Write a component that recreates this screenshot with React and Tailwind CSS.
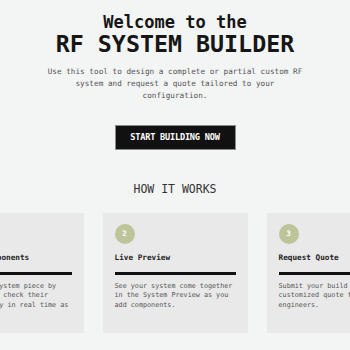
const steps = [
  {
    n: "1",
    title: "Select Components",
    text: "Build your system piece by piece and we check their compatibility in real time as",
  },
  {
    n: "2",
    title: "Live Preview",
    text: "See your system come together in the System Preview as you add components.",
  },
  {
    n: "3",
    title: "Request Quote",
    text: "Submit your build and get a customized quote from our engineers.",
  },
];

export default function App() {
  return (
    <div
      className="w-full h-[350px] overflow-hidden bg-[#f3f4f4] flex flex-col items-center pt-[14px]"
      style={{ fontFamily: '"DejaVu Sans Mono", "Liberation Mono", monospace' }}
    >
      {/* hero */}
      <h1 className="text-center text-[#161616] font-bold flex flex-col items-center">
        <span className="text-[17px] leading-[17px]">Welcome to the</span>
        <span className="text-[23.3px] leading-[25px]">RF SYSTEM BUILDER</span>
      </h1>
      <p className="mt-[10px] w-[262px] text-center text-[7.7px] leading-[12px] text-[#555]">
        Use this tool to design a complete or partial custom RF system and
        request a quote tailored to your configuration.
      </p>

      <button className="mt-[23px] h-[25px] w-[121px] bg-[#111] border border-[#8a8a8a] text-white text-[8.6px] font-bold tracking-tight">
        START BUILDING NOW
      </button>

      <h2 className="mt-[32px] text-[11.5px] leading-[14px] text-[#333]">
        HOW IT WORKS
      </h2>

      {/* steps */}
      <div className="mt-[17px] w-full flex justify-center gap-[19px]">
        {steps.map((s) => (
          <div
            key={s.n}
            className="w-[145px] shrink-0 bg-[#e9e9e9] px-[12px] pt-[11px] pb-[22px]"
          >
            <div className="w-[20px] h-[20px] rounded-full bg-[#bdc49a] flex items-center justify-center text-white text-[7.5px] font-bold">
              {s.n}
            </div>
            <h3 className="mt-[8.5px] text-[7.7px] leading-[10px] font-bold text-[#222]">
              {s.title}
            </h3>
            <div className="mt-[9px] h-[3px] bg-[#111]" />
            <p className="mt-[7px] text-[6.75px] leading-[9.7px] text-[#555]">
              {s.text}
            </p>
          </div>
        ))}
      </div>
    </div>
  );
}
